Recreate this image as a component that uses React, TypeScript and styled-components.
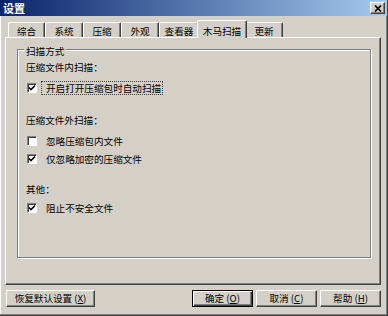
import React from 'react';
import styled, { createGlobalStyle } from 'styled-components';

const GlobalStyle = createGlobalStyle`
  html, body {
    margin: 0;
    padding: 0;
    background: #d4d0c8;
  }
  body {
    font-family: "Noto Sans CJK SC", "Liberation Sans", sans-serif;
    font-size: 9.6px;
    color: #000;
  }
`;

const Window = styled.div`
  width: 388px;
  height: 316px;
  box-sizing: border-box;
  background: #d4d0c8;
  border-right: 1px solid #404040;
  border-bottom: 1px solid #404040;
  box-shadow: inset -1px -1px #808080, inset 1px 1px #fff;
  display: flex;
  flex-direction: column;
`;

const TitleBar = styled.div`
  height: 16px;
  flex: none;
  display: flex;
  align-items: center;
  justify-content: space-between;
  padding: 0 2px 0 3px;
  background: linear-gradient(to right, #0a246a 0%, #a6caf0 100%);
`;

const Title = styled.span`
  color: #fff;
  font-weight: bold;
  font-size: 11px;
  line-height: 16px;
`;

const CloseButton = styled.div`
  box-sizing: border-box;
  width: 15px;
  height: 12px;
  background: #d4d0c8;
  border: 1px solid;
  border-color: #fff #404040 #404040 #fff;
  box-shadow: inset -1px -1px #808080;
  display: flex;
  align-items: center;
  justify-content: center;
`;

const Body = styled.div`
  flex: 1;
  display: flex;
  flex-direction: column;
  padding: 4px 6px 0 5px;
`;

const TabStrip = styled.div`
  display: flex;
  align-items: flex-end;
  height: 17px;
  padding-left: 3px;
`;

const Tab = styled.div<{ $w: number; $active?: boolean }>`
  box-sizing: border-box;
  width: ${p => p.$w + (p.$active ? 4 : 0)}px;
  height: ${p => (p.$active ? 18 : 15)}px;
  margin: ${p => (p.$active ? '0 -2px -1px' : '0')};
  padding-top: ${p => (p.$active ? 4 : 2)}px;
  text-align: center;
  line-height: 12px;
  white-space: nowrap;
  border: 1px solid;
  border-color: #fff #404040 transparent #fff;
  border-bottom: none;
  border-radius: 2px 2px 0 0;
  box-shadow: inset -1px 0 #808080;
  background: #d4d0c8;
  z-index: ${p => (p.$active ? 1 : 0)};
`;

const Panel = styled.div`
  box-sizing: border-box;
  height: 248px;
  border: 1px solid;
  border-color: #fff #404040 #404040 #fff;
  box-shadow: inset -1px -1px #808080;
  padding: 11px 0 0 11px;
`;

const GroupBox = styled.div`
  position: relative;
  box-sizing: border-box;
  width: 354px;
  height: 209px;
  border: 1px solid #808080;
  box-shadow: inset 1px 1px #fff, 1px 1px #fff;
  padding: 10px 8px 0;
`;

const Legend = styled.span`
  position: absolute;
  top: -5px;
  left: 6px;
  padding: 0 2px;
  line-height: 12px;
  background: #d4d0c8;
`;

const SectionLabel = styled.div<{ $mt: number }>`
  line-height: 14px;
  margin-top: ${p => p.$mt}px;
`;

const CheckRow = styled.div<{ $mt: number }>`
  display: flex;
  align-items: center;
  height: 14px;
  margin-top: ${p => p.$mt}px;
`;

const Box = styled.span`
  box-sizing: border-box;
  width: 10px;
  height: 10px;
  margin-left: 1px;
  background: #fff;
  border: 1px solid;
  border-color: #808080 #fff #fff #808080;
  box-shadow: inset 1px 1px #404040;
  display: flex;
  align-items: center;
  justify-content: center;
`;

const CheckText = styled.span<{ $focus?: boolean }>`
  line-height: 12px;
  margin-left: ${p => (p.$focus ? 4 : 9)}px;
  padding: ${p => (p.$focus ? '0 1px 0 4px' : '0')};
  border: ${p => (p.$focus ? '1px dotted #404040' : 'none')};
`;

const Footer = styled.div`
  display: flex;
  align-items: center;
  margin-top: 5px;
  height: 17px;
`;

const ButtonGroup = styled.div`
  display: flex;
  gap: 3px;
  margin-left: auto;
`;

const Button = styled.button<{ $w: number; $default?: boolean }>`
  box-sizing: border-box;
  width: ${p => p.$w}px;
  height: 17px;
  padding: 0;
  margin: 0;
  font: inherit;
  line-height: 13px;
  color: #000;
  background: #d4d0c8;
  border: 1px solid;
  border-color: ${p => (p.$default ? '#000' : '#fff #404040 #404040 #fff')};
  box-shadow: ${p =>
    p.$default
      ? 'inset 1px 1px #fff, inset -1px -1px #404040, inset -2px -2px #808080'
      : 'inset -1px -1px #808080'};

  &:first-child {
    margin-left: 1px;
  }

  u {
    text-decoration: underline;
  }
`;

const Check: React.FC<{ checked: boolean; focus?: boolean; label: string; mt: number }> = ({
  checked,
  focus,
  label,
  mt,
}) => (
  <CheckRow $mt={mt}>
    <Box>
      {checked && (
        <svg width="8" height="8" viewBox="0 0 8 8">
          <polyline points="1,3.5 3,5.5 7,1.5" fill="none" stroke="#000" strokeWidth="1.6" />
        </svg>
      )}
    </Box>
    <CheckText $focus={focus}>{label}</CheckText>
  </CheckRow>
);

const tabs = [
  { label: '综合', w: 37 },
  { label: '系统', w: 38 },
  { label: '压缩', w: 38 },
  { label: '外观', w: 38 },
  { label: '查看器', w: 40 },
  { label: '木马扫描', w: 46, active: true },
  { label: '更新', w: 38 },
];

export default function App() {
  return (
    <>
      <GlobalStyle />
      <Window>
        <TitleBar>
          <Title>设置</Title>
          <CloseButton>
            <svg width="8" height="7" viewBox="0 0 8 7">
              <path d="M1 0.5 L7 6.5 M7 0.5 L1 6.5" stroke="#000" strokeWidth="1.7" />
            </svg>
          </CloseButton>
        </TitleBar>
        <Body>
          <TabStrip>
            {tabs.map(t => (
              <Tab key={t.label} $w={t.w} $active={t.active}>
                {t.label}
              </Tab>
            ))}
          </TabStrip>
          <Panel>
            <GroupBox>
              <Legend>扫描方式</Legend>
              <SectionLabel $mt={0}>压缩文件内扫描：</SectionLabel>
              <Check checked focus label="开启打开压缩包时自动扫描" mt={7} />
              <SectionLabel $mt={18}>压缩文件外扫描：</SectionLabel>
              <Check checked={false} label="忽略压缩包内文件" mt={7} />
              <Check checked label="仅忽略加密的压缩文件" mt={4} />
              <SectionLabel $mt={16}>其他：</SectionLabel>
              <Check checked label="阻止不安全文件" mt={5} />
            </GroupBox>
          </Panel>
          <Footer>
            <Button $w={89}>
              恢复默认设置 (<u>X</u>)
            </Button>
            <ButtonGroup>
              <Button $w={61} $default>
                确定 (<u>O</u>)
              </Button>
              <Button $w={61}>
                取消 (<u>C</u>)
              </Button>
              <Button $w={61}>
                帮助 (<u>H</u>)
              </Button>
            </ButtonGroup>
          </Footer>
        </Body>
      </Window>
    </>
  );
}
